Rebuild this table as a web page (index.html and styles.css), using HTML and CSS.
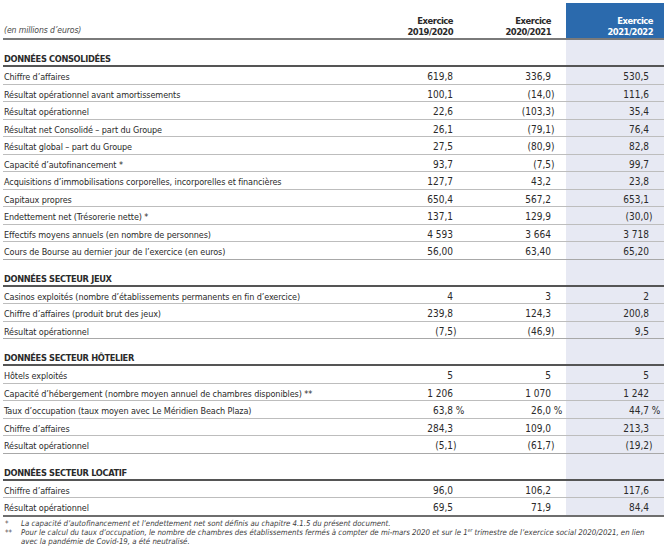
FILE: index.html
```html
<!DOCTYPE html>
<html lang="fr">
<head>
<meta charset="utf-8">
<title>Chiffres clés</title>
<link rel="stylesheet" href="styles.css">
</head>
<body>
<table class="kf">
  <colgroup>
    <col class="c-label">
    <col class="c-num">
    <col class="c-num">
    <col class="c-num">
  </colgroup>
  <thead>
    <tr class="head">
      <th class="unit">(en millions d’euros)</th>
      <th class="yr">Exercice<br>2019/2020</th>
      <th class="yr">Exercice<br>2020/2021</th>
      <th class="yr cur">Exercice<br>2021/2022</th>
    </tr>
  </thead>
  <tbody>
    <tr class="sec"><td>DONNÉES CONSOLIDÉES</td><td></td><td></td><td class="cur"></td></tr>
    <tr><td>Chiffre d’affaires</td><td>619,8</td><td>336,9</td><td class="cur">530,5</td></tr>
    <tr><td>Résultat opérationnel avant amortissements</td><td>100,1</td><td>(14,0<span class="hang">)</span></td><td class="cur">111,6</td></tr>
    <tr><td>Résultat opérationnel</td><td>22,6</td><td>(103,3<span class="hang">)</span></td><td class="cur">35,4</td></tr>
    <tr><td>Résultat net Consolidé – part du Groupe</td><td>26,1</td><td>(79,1<span class="hang">)</span></td><td class="cur">76,4</td></tr>
    <tr><td>Résultat global – part du Groupe</td><td>27,5</td><td>(80,9<span class="hang">)</span></td><td class="cur">82,8</td></tr>
    <tr><td>Capacité d’autofinancement *</td><td>93,7</td><td>(7,5<span class="hang">)</span></td><td class="cur">99,7</td></tr>
    <tr><td>Acquisitions d’immobilisations corporelles, incorporelles et financières</td><td>127,7</td><td>43,2</td><td class="cur">23,8</td></tr>
    <tr><td>Capitaux propres</td><td>650,4</td><td>567,2</td><td class="cur">653,1</td></tr>
    <tr><td>Endettement net (Trésorerie nette) *</td><td>137,1</td><td>129,9</td><td class="cur">(30,0<span class="hang">)</span></td></tr>
    <tr><td>Effectifs moyens annuels (en nombre de personnes)</td><td>4 593</td><td>3 664</td><td class="cur">3 718</td></tr>
    <tr class="last"><td>Cours de Bourse au dernier jour de l’exercice (en euros)</td><td>56,00</td><td>63,40</td><td class="cur">65,20</td></tr>

    <tr class="sec"><td>DONNÉES SECTEUR JEUX</td><td></td><td></td><td class="cur"></td></tr>
    <tr><td>Casinos exploités (nombre d’établissements permanents en fin d’exercice)</td><td>4</td><td>3</td><td class="cur">2</td></tr>
    <tr><td>Chiffre d’affaires (produit brut des jeux)</td><td>239,8</td><td>124,3</td><td class="cur">200,8</td></tr>
    <tr class="last"><td>Résultat opérationnel</td><td>(7,5<span class="hang">)</span></td><td>(46,9<span class="hang">)</span></td><td class="cur">9,5</td></tr>

    <tr class="sec"><td>DONNÉES SECTEUR HÔTELIER</td><td></td><td></td><td class="cur"></td></tr>
    <tr><td>Hôtels exploités</td><td>5</td><td>5</td><td class="cur">5</td></tr>
    <tr><td>Capacité d’hébergement (nombre moyen annuel de chambres disponibles) **</td><td>1 206</td><td>1 070</td><td class="cur">1 242</td></tr>
    <tr><td>Taux d’occupation (taux moyen avec Le Méridien Beach Plaza)</td><td>63,8<span class="hang">&nbsp;%</span></td><td>26,0<span class="hang">&nbsp;%</span></td><td class="cur">44,7<span class="hang">&nbsp;%</span></td></tr>
    <tr><td>Chiffre d’affaires</td><td>284,3</td><td>109,0</td><td class="cur">213,3</td></tr>
    <tr class="last"><td>Résultat opérationnel</td><td>(5,1<span class="hang">)</span></td><td>(61,7<span class="hang">)</span></td><td class="cur">(19,2<span class="hang">)</span></td></tr>

    <tr class="sec"><td>DONNÉES SECTEUR LOCATIF</td><td></td><td></td><td class="cur"></td></tr>
    <tr><td>Chiffre d’affaires</td><td>96,0</td><td>106,2</td><td class="cur">117,6</td></tr>
    <tr class="end"><td>Résultat opérationnel</td><td>69,5</td><td>71,9</td><td class="cur">84,4</td></tr>
  </tbody>
</table>
<div class="notes">
  <div class="note"><span class="mark">*</span><span class="ntext">La capacité d’autofinancement et l’endettement net sont définis au chapitre 4.1.5 du présent document.</span></div>
  <div class="note"><span class="mark">**</span><span class="ntext">Pour le calcul du taux d’occupation, le nombre de chambres des établissements fermés à compter de mi-mars 2020 et sur le 1<sup>er</sup> trimestre de l’exercice social 2020/2021, en lien<br>avec la pandémie de Covid-19, a été neutralisé.</span></div>
</div>
</body>
</html>
```
FILE: styles.css
```css
html, body {
  margin: 0;
  padding: 0;
  background: #ffffff;
}
body {
  padding: 3px 3px 0 3px;
  font-family: "DejaVu Sans Condensed", "Liberation Sans Narrow", "Liberation Sans", sans-serif;
  color: #2a2a2a;
  font-size: 10px;
}
.kf {
  width: 661px;
  border-collapse: collapse;
  table-layout: fixed;
}
.c-label { width: 367px; }
.c-num { width: 98px; }

.kf th, .kf td {
  padding: 0;
  white-space: nowrap;
}
.head th {
  height: 34px;
  vertical-align: bottom;
  border-bottom: 2px solid #7a7a7a;
  padding-bottom: 0;
  line-height: 11.6px;
}
.head .unit {
  text-align: left;
  font-weight: normal;
  font-style: italic;
  font-size: 8.6px;
  letter-spacing: -0.1px;
  color: #4a4a4a;
  padding-left: 1px;
  padding-bottom: 1px;
}
.head .yr {
  text-align: right;
  font-weight: bold;
  font-size: 9.4px;
  letter-spacing: -0.5px;
  padding-right: 15px;
  color: #2a2a2a;
}
.head .yr.cur {
  background: #2b6aad;
  color: #ffffff;
  padding-right: 11px;
}

.kf tbody td {
  font-size: 10px;
  line-height: 12.5px;
  padding-top: 4px;
  padding-bottom: 0;
  border-bottom: 1px solid #bdbdbd;
  text-align: right;
  padding-right: 15px;
}
.kf tbody td:first-child {
  text-align: left;
  font-size: 9px;
  letter-spacing: -0.1px;
  padding-left: 1px;
  padding-right: 0;
}
.kf tbody td.cur {
  background: #e7e9f3;
}
.kf tbody tr.sec td {
  font-weight: bold;
  font-size: 9.2px;
  letter-spacing: -0.35px;
  line-height: 12px;
  padding-top: 13px;
  border-bottom: 2px solid #555555;
}
.kf tbody tr.last td {
  border-bottom: 1px solid #a8a8a8;
}
.kf tbody tr.end td {
  border-bottom: 2px solid #6e6e6e;
}
.hang {
  display: inline-block;
  width: 0;
  white-space: nowrap;
  text-align: left;
}

.notes {
  margin-top: 2px;
  font-style: italic;
  font-size: 7.8px;
  line-height: 9px;
  color: #3c3c3c;
}
.note {
  display: flex;
}
.mark {
  flex: 0 0 16px;
  padding-left: 2px;
}
.ntext {
  flex: 1 1 auto;
  white-space: nowrap;
}
.ntext sup {
  font-size: 5px;
  line-height: 0;
  vertical-align: 3px;
}
```
